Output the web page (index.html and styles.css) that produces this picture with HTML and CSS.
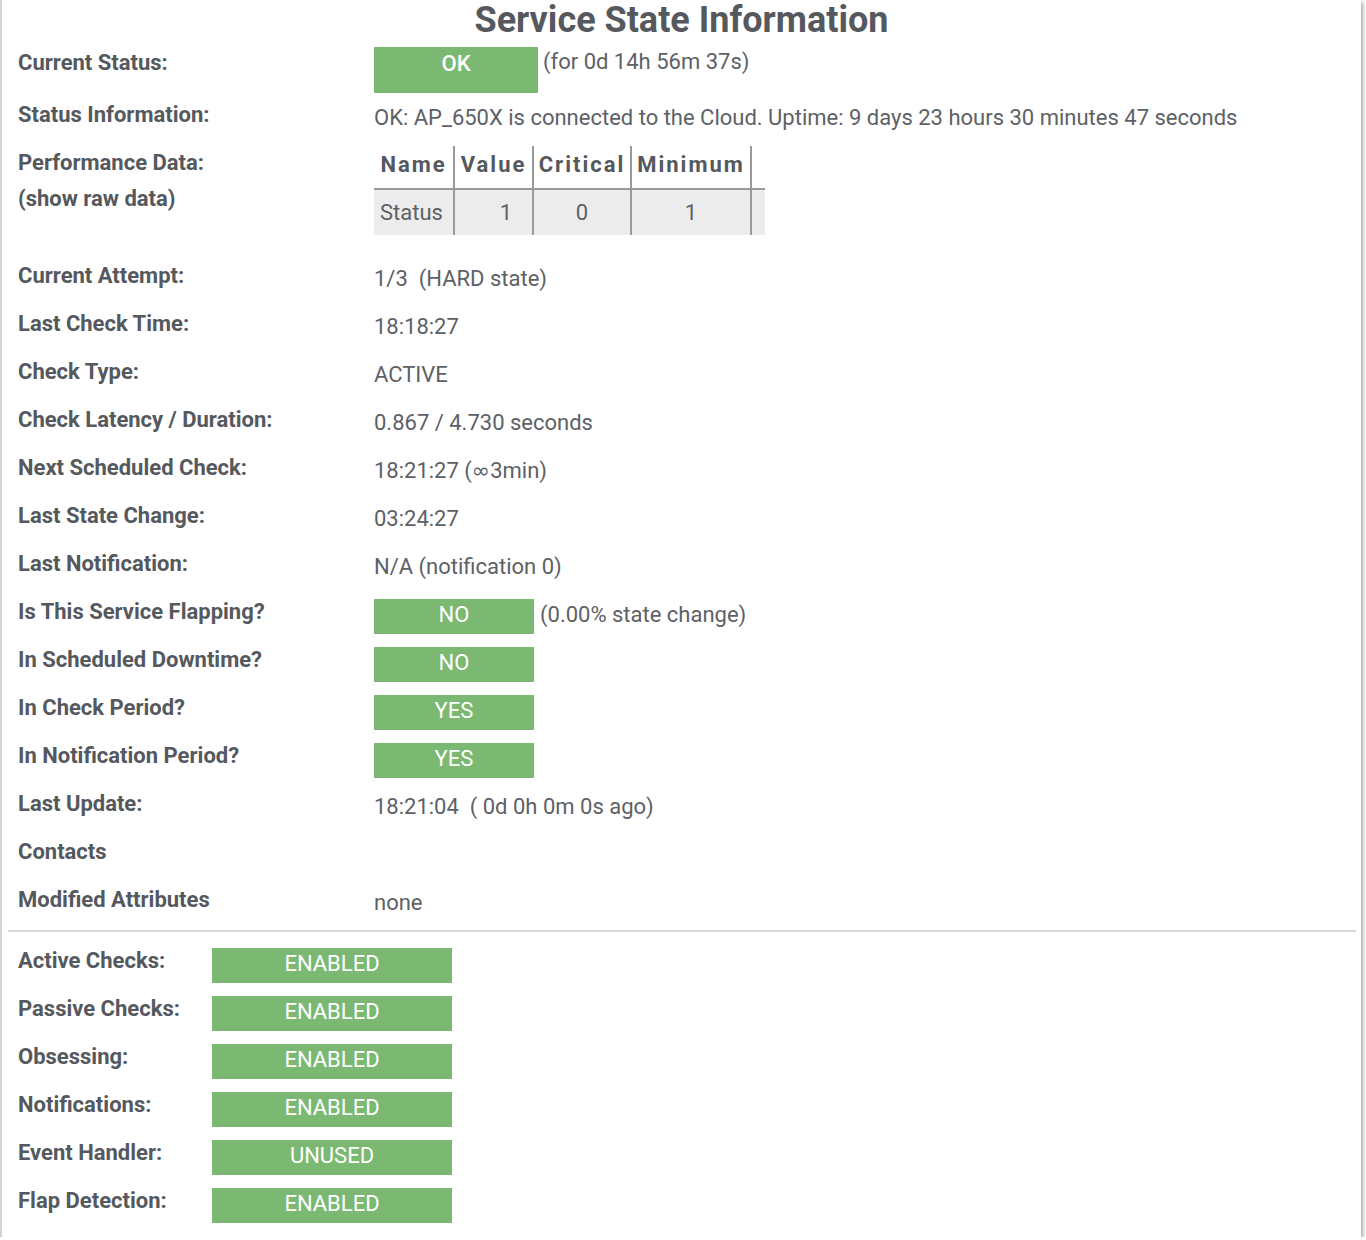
FILE: index.html
```html
<!DOCTYPE html>
<html>
<head>
<meta charset="utf-8">
<title>Service State Information</title>
<link rel="stylesheet" href="styles.css">
</head>
<body>
<div class="frame">
  <h1 class="title">Service State Information</h1>

  <div class="row first">
    <div class="lbl">Current Status:</div>
    <div class="val badge-val"><span class="badge badge-ok">OK</span><span class="after">(for 0d 14h 56m 37s)</span></div>
  </div>
  <div class="row">
    <div class="lbl">Status Information:</div>
    <div class="val">OK: AP_650X is connected to the Cloud. Uptime: 9 days 23 hours 30 minutes 47 seconds</div>
  </div>
  <div class="row perf">
    <div class="lbl">Performance Data:<div class="raw">(show raw data)</div></div>
    <div class="val table-val">
      <table class="perf-table">
        <thead>
          <tr><th class="c-name">Name</th><th class="c-value">Value</th><th class="c-crit">Critical</th><th class="c-min">Minimum</th><th class="c-extra"></th></tr>
        </thead>
        <tbody>
          <tr><td class="c-name">Status</td><td class="c-value num-r">1</td><td class="c-crit num-c">0</td><td class="c-min num-c">1</td><td class="c-extra"></td></tr>
        </tbody>
      </table>
    </div>
  </div>
  <div class="row">
    <div class="lbl">Current Attempt:</div>
    <div class="val">1/3&nbsp; (HARD state)</div>
  </div>
  <div class="row">
    <div class="lbl">Last Check Time:</div>
    <div class="val">18:18:27</div>
  </div>
  <div class="row">
    <div class="lbl">Check Type:</div>
    <div class="val">ACTIVE</div>
  </div>
  <div class="row">
    <div class="lbl">Check Latency / Duration:</div>
    <div class="val">0.867 / 4.730 seconds</div>
  </div>
  <div class="row">
    <div class="lbl">Next Scheduled Check:</div>
    <div class="val">18:21:27 (<span class="inf">∞</span>3min)</div>
  </div>
  <div class="row">
    <div class="lbl">Last State Change:</div>
    <div class="val">03:24:27</div>
  </div>
  <div class="row">
    <div class="lbl">Last Notification:</div>
    <div class="val">N/A (notification 0)</div>
  </div>
  <div class="row">
    <div class="lbl">Is This Service Flapping?</div>
    <div class="val badge-val small"><span class="badge badge-sm">NO</span><span class="after">(0.00% state change)</span></div>
  </div>
  <div class="row">
    <div class="lbl">In Scheduled Downtime?</div>
    <div class="val badge-val small"><span class="badge badge-sm">NO</span></div>
  </div>
  <div class="row">
    <div class="lbl">In Check Period?</div>
    <div class="val badge-val small"><span class="badge badge-sm">YES</span></div>
  </div>
  <div class="row">
    <div class="lbl">In Notification Period?</div>
    <div class="val badge-val small"><span class="badge badge-sm">YES</span></div>
  </div>
  <div class="row">
    <div class="lbl">Last Update:</div>
    <div class="val">18:21:04&nbsp; ( 0d 0h 0m 0s ago)</div>
  </div>
  <div class="row">
    <div class="lbl">Contacts</div>
    <div class="val"></div>
  </div>
  <div class="row">
    <div class="lbl">Modified Attributes</div>
    <div class="val">none</div>
  </div>

  <hr class="sep">

  <div class="row feat">
    <div class="lbl">Active Checks:</div>
    <div class="val badge-val small"><span class="badge badge-wide">ENABLED</span></div>
  </div>
  <div class="row feat">
    <div class="lbl">Passive Checks:</div>
    <div class="val badge-val small"><span class="badge badge-wide">ENABLED</span></div>
  </div>
  <div class="row feat">
    <div class="lbl">Obsessing:</div>
    <div class="val badge-val small"><span class="badge badge-wide">ENABLED</span></div>
  </div>
  <div class="row feat">
    <div class="lbl">Notifications:</div>
    <div class="val badge-val small"><span class="badge badge-wide">ENABLED</span></div>
  </div>
  <div class="row feat">
    <div class="lbl">Event Handler:</div>
    <div class="val badge-val small"><span class="badge badge-wide">UNUSED</span></div>
  </div>
  <div class="row feat">
    <div class="lbl">Flap Detection:</div>
    <div class="val badge-val small"><span class="badge badge-wide">ENABLED</span></div>
  </div>
</div>
</body>
</html>
```

FILE: styles.css
```css
html, body {
  margin: 0;
  padding: 0;
  background: #ffffff;
}

body {
  font-family: Roboto, "Liberation Sans", Arial, sans-serif;
  color: #5a5e63;
  font-size: 22px;
  line-height: 24px;
}

.frame {
  width: 1361px;
  box-sizing: border-box;
  border-left: 2px solid #d2d2d2;
  box-shadow: 2px 2px 4px rgba(0, 0, 0, 0.35);
  padding: 0 0 11px 16px;
  background: #ffffff;
}

.title {
  margin: 0 0 0 -16px;
  font-size: 36px;
  line-height: 40px;
  height: 40px;
  font-weight: 700;
  text-align: center;
  color: #55595e;
}

.row {
  display: grid;
  grid-template-columns: 356px 1fr;
  height: 48px;
  white-space: nowrap;
}

.row.first {
  height: 52px;
}

.row.perf {
  height: 113px;
}

.row.feat {
  grid-template-columns: 194px 1fr;
}

.lbl {
  font-weight: 700;
  padding-top: 11px;
  color: #55595e;
}

.raw {
  margin-top: 12px;
}

.val {
  padding-top: 14px;
  color: #5d6166;
}

.inf {
  font-family: "DejaVu Sans", sans-serif;
  font-size: 22px;
}

.badge-val {
  display: flex;
  align-items: flex-start;
  padding-top: 7px;
}

.badge-val.small {
  padding-top: 10px;
}

.badge {
  display: block;
  box-sizing: border-box;
  background: #7bb872;
  color: #ffffff;
  text-align: center;
}

.badge-ok {
  width: 164px;
  height: 46px;
  padding-top: 5px;
  font-weight: 500;
}

.badge-sm {
  width: 160px;
  height: 35px;
  padding-top: 4px;
}

.badge-wide {
  width: 240px;
  height: 35px;
  padding-top: 4px;
}

.badge-val .after {
  margin-left: 5px;
  padding-top: 3px;
}

.badge-val.small .after {
  margin-left: 6px;
  padding-top: 4px;
}

.table-val {
  padding-top: 6px;
}

.perf-table {
  border-collapse: collapse;
  border-spacing: 0;
}

.perf-table th,
.perf-table td {
  padding: 0;
  box-sizing: border-box;
}

.perf-table th {
  height: 43px;
  padding-top: 7px;
  vertical-align: top;
  font-weight: 700;
  letter-spacing: 2px;
  color: #55595e;
  border-bottom: 2px solid #9a9a9a;
  text-align: center;
}

.perf-table td {
  height: 46px;
  padding-top: 11px;
  vertical-align: top;
  background: #ececec;
}

.perf-table .c-name,
.perf-table .c-value,
.perf-table .c-crit,
.perf-table .c-min {
  border-right: 2px solid #9a9a9a;
}

.c-name { width: 80px; }
.c-value { width: 79px; }
.c-crit { width: 98px; }
.c-min { width: 120px; }
.c-extra { width: 14px; }

.perf-table td.c-name {
  text-align: left;
  padding-left: 6px;
}

.num-r {
  text-align: right;
  padding-right: 20px !important;
}

.num-c {
  text-align: center;
}

.sep {
  margin: 5px 5px 6px -10px;
  border: 0;
  height: 2px;
  background: #d8d8d8;
}
```
